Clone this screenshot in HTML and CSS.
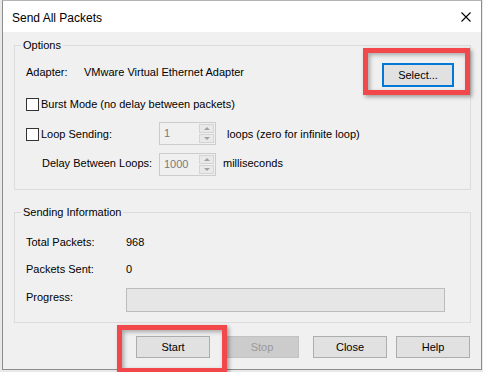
FILE: index.html
```html
<!DOCTYPE html>
<html lang="en">
<head>
    <meta charset="UTF-8">
    <title>Send All Packets</title>
    <link rel="stylesheet" href="styles.css">
</head>
<body>
    <div class="desk">
        <div class="window">
            <div class="titlebar">
                <span class="title">Send All Packets</span>
                <svg class="close-x" width="10" height="10" viewBox="0 0 10 10">
                    <path d="M0.5 0.5 L9.5 9.5 M9.5 0.5 L0.5 9.5" stroke="#000" stroke-width="1.1" fill="none"/>
                </svg>
            </div>

            <div class="client">
                <!-- Options group -->
                <fieldset class="group group-options">
                    <legend>Options</legend>

                    <div class="row adapter-row">
                        <span class="adapter-label">Adapter:</span>
                        <span class="adapter-name">VMware Virtual Ethernet Adapter</span>
                        <button class="btn btn-default">Select...</button>
                    </div>

                    <div class="row burst-row">
                        <span class="check"></span>
                        <span class="check-label">Burst Mode (no delay between packets)</span>
                    </div>

                    <div class="row loop-row">
                        <div class="loop-first">
                            <span class="check"></span>
                            <span class="check-label">Loop Sending:</span>
                        </div>
                        <div class="spin">
                            <span class="spin-value">1</span>
                            <span class="spin-arrows"><span class="spin-btn up"></span><span class="spin-btn down"></span></span>
                        </div>
                        <span class="after-loops">loops (zero for infinite loop)</span>
                    </div>

                    <div class="row delay-row">
                        <span class="delay-label">Delay Between Loops:</span>
                        <div class="spin">
                            <span class="spin-value">1000</span>
                            <span class="spin-arrows"><span class="spin-btn up"></span><span class="spin-btn down"></span></span>
                        </div>
                        <span class="after-ms">milliseconds</span>
                    </div>
                </fieldset>

                <!-- Sending information group -->
                <fieldset class="group group-info">
                    <legend>Sending Information</legend>

                    <div class="row info-row total-row">
                        <span class="info-label">Total Packets:</span>
                        <span class="info-value">968</span>
                    </div>
                    <div class="row info-row sent-row">
                        <span class="info-label">Packets Sent:</span>
                        <span class="info-value">0</span>
                    </div>
                    <div class="row progress-row">
                        <span class="info-label progress-label">Progress:</span>
                        <div class="progress"></div>
                    </div>
                </fieldset>

                <div class="buttons">
                    <button class="btn btn-start">Start</button>
                    <button class="btn btn-stop" disabled>Stop</button>
                    <button class="btn btn-close">Close</button>
                    <button class="btn btn-help">Help</button>
                </div>
            </div>
        </div>

        <!-- red highlight marks drawn over the dialog -->
        <div class="mark mark-select"></div>
        <div class="mark mark-start"></div>
    </div>
</body>
</html>
```

FILE: styles.css
```css
/* General */
body {
    margin: 0;
    background: #e9e9e9;
    font-family: "Liberation Sans", Arial, sans-serif;
    font-size: 11px;
    color: #000;
}

.desk {
    position: relative;
    width: 483px;
    height: 372px;
    padding-left: 2px;
    box-sizing: border-box;
    overflow: hidden;
}

/* Window frame */
.window {
    width: 480px;
    height: 370px;
    box-sizing: border-box;
    border: 1px solid #8c8c8c;
    border-top-color: #b4b4b4;
    background: #f0f0f0;
    display: flex;
    flex-direction: column;
}

.titlebar {
    height: 31px;
    background: #fff;
    display: flex;
    justify-content: space-between;
    align-items: flex-start;
    padding: 10px 10px 0 9px;
    box-sizing: border-box;
}

.title {
    font-size: 12px;
    line-height: 14px;
}

.close-x {
    margin-top: 1px;
}

.client {
    flex: 1;
    display: flex;
    flex-direction: column;
}

/* Group boxes */
.group {
    margin: 0 10px 0 11px;
    padding: 0;
    border: 1px solid #dcdcdc;
    min-width: 0;
}

.group legend {
    margin-left: 6px;
    padding: 0 2px;
    line-height: 14px;
}

.group-options {
    margin-top: 6px;
    padding-bottom: 13px;
}

.group-info {
    margin-top: 15px;
    padding-bottom: 10px;
}

.row {
    display: flex;
    align-items: flex-start;
    padding-left: 11px;
    line-height: 13px;
}

/* Adapter */
.adapter-row {
    margin-top: 11px;
    height: 24px;
}

.adapter-label {
    width: 58px;
    margin-top: 3px;
}

.adapter-name {
    margin-top: 3px;
}

/* Buttons */
.btn {
    font-family: inherit;
    font-size: 11px;
    line-height: 13px;
    padding: 0;
    width: 74px;
    height: 22px;
    background: #e1e1e1;
    border: 1px solid #adadad;
    color: #000;
    box-sizing: border-box;
}

.btn-default {
    margin-left: auto;
    margin-right: 16px;
    width: 72px;
    height: 24px;
    border: 2px solid #0078d7;
}

.btn-stop {
    background: #cccccc;
    border-color: #c2c2c2;
    color: #9a9a9a;
}

/* Checkboxes */
.check {
    width: 13px;
    height: 13px;
    box-sizing: border-box;
    border: 1px solid #333;
    background: #fff;
    flex-shrink: 0;
}

.check-label {
    margin-left: 2px;
}

.burst-row {
    margin-top: 11px;
    height: 13px;
}

.loop-row {
    margin-top: 11px;
    height: 23px;
}

.loop-first {
    width: 133px;
    display: flex;
    margin-top: 6px;
}

.after-loops {
    margin-left: 11px;
    margin-top: 6px;
}

.delay-row {
    margin-top: 8px;
    height: 23px;
}

.delay-label {
    width: 117px;
    margin-left: 16px;
    margin-top: 4px;
}

.after-ms {
    margin-left: 7px;
    margin-top: 4px;
}

/* Spinner */
.spin {
    width: 57px;
    height: 23px;
    box-sizing: border-box;
    border: 1px solid #cccccc;
    background: #f0f0f0;
    display: flex;
}

.spin-value {
    flex: 1;
    padding-left: 4px;
    line-height: 20px;
    color: #7a7a7a;
}

.spin-arrows {
    width: 16px;
    display: flex;
    flex-direction: column;
    padding: 1px 1px 1px 0;
    gap: 1px;
    box-sizing: border-box;
}

.spin-btn {
    flex: 1;
    border: 1px solid #d4d4d4;
    background: #e9e9e9;
    display: flex;
    justify-content: center;
    align-items: center;
}

.spin-btn::after {
    content: "";
    border-left: 3px solid transparent;
    border-right: 3px solid transparent;
}

.spin-btn.up::after {
    border-bottom: 3px solid #a2a2a2;
}

.spin-btn.down::after {
    border-top: 3px solid #a2a2a2;
}

/* Sending information */
.info-label {
    width: 100px;
}

.total-row {
    margin-top: 17px;
}

.sent-row {
    margin-top: 14px;
}

.progress-row {
    margin-top: 12px;
    height: 24px;
}

.progress-label {
    margin-top: 3px;
}

.progress {
    width: 319px;
    height: 24px;
    box-sizing: border-box;
    background: #e6e6e6;
    border: 1px solid #bcbcbc;
}

/* Bottom buttons */
.buttons {
    display: flex;
    justify-content: flex-end;
    margin-top: 13px;
    padding-right: 11px;
}

.btn-stop {
    margin-left: 15px;
}

.btn-close {
    margin-left: 14px;
}

.btn-help {
    margin-left: 9px;
}

/* Red highlight marks */
.mark {
    position: absolute;
    border: 5px solid #f2474b;
    box-shadow: 2px 2px 4px rgba(0, 0, 0, 0.35), inset 2px 2px 4px rgba(0, 0, 0, 0.3);
}

.mark-select {
    left: 363px;
    top: 48px;
    width: 97px;
    height: 37px;
}

.mark-start {
    left: 117px;
    top: 325px;
    width: 100px;
    height: 38px;
}
```
